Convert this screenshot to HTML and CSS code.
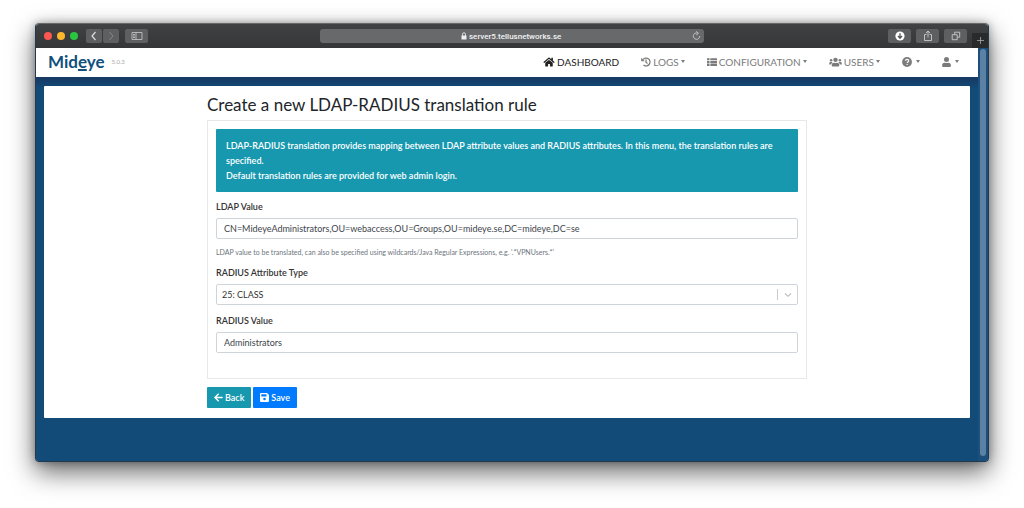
FILE: index.html
```html
<!DOCTYPE html>
<html lang="en">
<head>
    <meta charset="UTF-8">
    <meta name="viewport" content="width=device-width, initial-scale=1.0">
    <title>Mideye Server</title>
    <link rel="stylesheet" href="styles.css">
</head>
<body>
    <div class="window">
        <div class="toolbar">
            <div class="toolbar-side">
                <span class="dot red"></span>
                <span class="dot yellow"></span>
                <span class="dot green"></span>
                <div class="history">
                    <button aria-label="Previous page"><svg width="8" height="10" viewBox="0 0 8 10"><path d="M5.5 1 2 5l3.500 4" fill="none" stroke="#ddd" stroke-width="1.200"/></svg></button>
                    <button aria-label="Next page"><svg width="8" height="10" viewBox="0 0 8 10"><path d="M2.500 1 6 5 2.500 9" fill="none" stroke="#858688"/></svg></button>
                </div>
                <button aria-label="Sidebar"><svg width="12" height="10" viewBox="0 0 12 10"><path d="M1 1.500h10v7H1zM5 1.500v7M2 3.500h2M2 5h2M2 6.500h2" fill="none" stroke="#ccc" stroke-width=".8"/></svg></button>
            </div>
            <div class="address">
                <svg width="6" height="8" viewBox="0 0 6 8"><path d="M.5 3.500h5V7.500h-5z" fill="#eee"/><path d="M1.500 4V2.300a1.500 1.500 0 0 1 3 0V4" fill="none" stroke="#eee" stroke-width=".9"/></svg>
                <input type="text" value="server5.tellusnetworks.se" aria-label="Address" spellcheck="false">
                <button class="reload" aria-label="Reload"><svg width="9" height="10" viewBox="0 0 9 10"><path d="M7.700 5A3.200 3.200 0 1 1 5.500 2.100" fill="none" stroke="#ccc" stroke-width=".9"/><path d="M4.300.4 6.500 2.300 4.300 4" fill="none" stroke="#ccc" stroke-width=".9"/></svg></button>
            </div>
            <div class="toolbar-side right">
                <button aria-label="Downloads"><svg width="10" height="10" viewBox="0 0 10 10"><circle cx="5" cy="5" r="4.600" fill="#fff"/><path d="M5 2.200v4.500M3 5l2 2.300L7 5" fill="none" stroke="#555" stroke-width="1.300"/></svg></button>
                <button aria-label="Share"><svg width="10" height="12" viewBox="0 0 10 12"><path d="M3.500 4.500h-2v6h7v-6h-2M5 7.500V1M3 3l2-2 2 2" fill="none" stroke="#ccc" stroke-width=".9"/></svg></button>
                <button aria-label="Show tabs"><svg width="10" height="10" viewBox="0 0 10 10"><path d="M1.200 3.700h5v5h-5zM3.700 3.500V1.200h5v5H6.500" fill="none" stroke="#ccc" stroke-width=".9"/></svg></button>
            </div>
            <button class="new-tab" aria-label="New tab"><svg width="9" height="9" viewBox="0 0 9 9"><path d="M4.500 1v7M1 4.500h7" stroke="#aaa" stroke-width=".8"/></svg></button>
        </div>

        <div class="viewport">
            <div class="page">
                <header class="header">
                    <a href="#" class="logo">Mid<span>e</span>ye</a>
                    <span class="version">5.0.3</span>
                    <nav class="nav">
                        <a href="#" class="active">
                            <svg width="12" height="10" viewBox="0 0 576 512"><path fill="currentColor" d="M280 148 96 300v164c0 9 7 16 16 16h112c9 0 16-7 16-16v-96c0-9 7-16 16-16h64c9 0 16 7 16 16v96c0 9 7 16 16 16h112c9 0 16-7 16-16V300L296 148q-8-5-16 0zM572 251l-84-69V44c0-7-5-12-12-12h-56c-7 0-12 5-12 12v73l-90-74q-30-24-60 0L4 251q-7 7-2 17l26 31q7 7 17 2L280 107q8-5 16 0l235 194q10 5 17-2l26-31q5-10-2-17z"/></svg>
                            DASHBOARD
                        </a>
                        <a href="#">
                            <svg width="10" height="10" viewBox="0 0 512 512"><path fill="none" stroke="currentColor" stroke-width="64" d="M90 140A204 204 0 1 1 125 412M256 130v140l78 60"/><path fill="currentColor" d="M8 32v160c0 14 10 24 24 24h160z"/></svg>
                            LOGS<i class="caret"></i>
                        </a>
                        <a href="#">
                            <svg width="10" height="10" viewBox="0 0 512 512"><path fill="currentColor" d="M0 60h128v110H0zM170 60h342v110H170zM0 205h128v110H0zM170 205h342v110H170zM0 350h128v110H0zM170 350h342v110H170z"/></svg>
                            CONFIGURATION<i class="caret"></i>
                        </a>
                        <a href="#">
                            <svg width="13" height="10" viewBox="0 0 640 512"><g fill="currentColor"><circle cx="96" cy="160" r="64"/><circle cx="544" cy="160" r="64"/><circle cx="320" cy="144" r="112"/><path d="M0 320q0-64 64-64h64q26 0 45 18-65 36-75 110H32q-32 0-32-32zM640 320q0-64-64-64h-64q-26 0-45 18 65 36 75 110h66q32 0 32-32zM128 432v-29q0-115 115-115h8q69 32 138 0h8q115 0 115 115v29q0 48-48 48H176q-48 0-48-48z"/></g></svg>
                            USERS<i class="caret"></i>
                        </a>
                        <a href="#" aria-label="Help" class="icon-only">
                            <svg width="10" height="10" viewBox="0 0 10 10"><circle cx="5" cy="5" r="4.900" fill="currentColor"/><path d="M3.400 3.800c.2-1.900 3.300-1.800 3.300 0 0 1.100-1.600 1.100-1.600 2.200M5.100 6.900v1.200" fill="none" stroke="#fff" stroke-width="1.200"/></svg>
                            <i class="caret"></i>
                        </a>
                        <a href="#" aria-label="Account" class="icon-only">
                            <svg width="9" height="10" viewBox="0 0 448 512"><path fill="currentColor" d="M224 256a128 128 0 1 0 0-256 128 128 0 0 0 0 256zM314 288h-17q-73 32-146 0h-17Q0 296 0 422v42q0 48 48 48h352q48 0 48-48v-42q0-126-134-134z"/></svg>
                            <i class="caret"></i>
                        </a>
                    </nav>
                </header>

                <main class="card">
                    <form class="rule">
                        <h1>Create a new LDAP-RADIUS translation rule</h1>
                        <div class="fields">
                            <div class="alert">
                                <p>LDAP-RADIUS translation provides mapping between LDAP attribute values and RADIUS attributes. In this menu, the translation rules are specified.</p>
                                <p>Default translation rules are provided for web admin login.</p>
                            </div>
                            <label for="ldap-value">LDAP Value</label>
                            <input type="text" id="ldap-value" value="CN=MideyeAdministrators,OU=webaccess,OU=Groups,OU=mideye.se,DC=mideye,DC=se" spellcheck="false">
                            <p class="help">LDAP value to be translated, can also be specified using wildcards/Java Regular Expressions, e.g. '.*VPNUsers.*'</p>
                            <label for="attribute-type">RADIUS Attribute Type</label>
                            <div class="select">
                                <select id="attribute-type">
                                    <option>25: CLASS</option>
                                </select>
                                <svg width="8" height="6" viewBox="0 0 8 6"><path d="M1 1.500 4 4.300l3-2.800" fill="none" stroke="#bbb" stroke-width="1.100"/></svg>
                            </div>
                            <label for="radius-value">RADIUS Value</label>
                            <input type="text" id="radius-value" value="Administrators">
                        </div>
                        <div class="actions">
                            <button type="button" class="back"><svg width="9" height="9" viewBox="0 0 9 9"><path d="M8.700 4.500H1.200M4.700.8 1 4.500l3.700 3.700" fill="none" stroke="#fff" stroke-width="1.400"/></svg>Back</button>
                            <button type="submit" class="save"><svg width="9" height="9" viewBox="0 0 9 9"><path d="M1 0h6l2 2v6q0 1-1 1H1Q0 9 0 8V1q0-1 1-1zM1.300 1.300v2.200h5.200V1.300zM4.500 4.700a1.300 1.300 0 1 0 0 2.600 1.300 1.300 0 0 0 0-2.600z" fill="#fff" fill-rule="evenodd"/></svg>Save</button>
                        </div>
                    </form>
                </main>
            </div>
            <div class="scrollbar"><div class="thumb"></div></div>
        </div>
    </div>
</body>
</html>
```
FILE: styles.css
```css
*{
    margin: 0;
    padding: 0;
    box-sizing: border-box;
    font-family: Lato, sans-serif;
}
body{
    background: #fff;
    min-height: 100vh;
    padding: 23px 35px 46px;
    display: flex;
}
button{
    border: 0;
    cursor: pointer;
}
svg{
    flex: none;
}
.window{
    flex: 1;
    display: flex;
    flex-direction: column;
    border-radius: 4px;
    overflow: hidden;
    border: 1px solid #203a50;
    border-top-color: #66686a;
    box-shadow: 0 10px 26px rgba(0,0,0,0.6), 0 0 8px rgba(0,0,0,0.3);
}

/* browser toolbar */
.toolbar{
    position: relative;
    height: 24px;
    background: linear-gradient(#404244,#343638);
    display: flex;
    align-items: center;
    padding: 0 8px;
}
.toolbar-side{
    flex: 1;
    display: flex;
    align-items: center;
    gap: 5px;
}
.toolbar-side.right{
    justify-content: flex-end;
}
.toolbar-side.right button:last-child{
    margin-right: 13px;
}
.toolbar button{
    display: flex;
    align-items: center;
    justify-content: center;
    background: #5d5f61;
    width: 23px;
    height: 14px;
    border-radius: 2px;
}
.dot{
    width: 8px;
    height: 8px;
    border-radius: 50%;
}
.red{
    background: #fc5650;
}
.yellow{
    background: #fdb72c;
}
.green{
    background: #28c73f;
}
.history{
    display: flex;
    gap: 1px;
    margin: 0 1px 0 3px;
}
.toolbar .history button{
    width: 16px;
}
.address{
    position: relative;
    width: 41%;
    height: 14px;
    background: #67696b;
    border-radius: 3px;
    display: flex;
    align-items: center;
    justify-content: center;
    gap: 2px;
}
.address input{
    width: 94px;
    border: 0;
    outline: 0;
    background: none;
    color: #f2f2f2;
    font: 500 8px Roboto, sans-serif;
}
.toolbar .reload{
    position: absolute;
    right: 2px;
    width: 11px;
    background: none;
}
.toolbar .new-tab{
    position: absolute;
    right: 0;
    bottom: 0;
    width: 16px;
    height: 15px;
    background: #292a2b;
    border-radius: 0;
}

/* page */
.viewport{
    flex: 1;
    display: flex;
    background: #124a78;
}
.page{
    flex: 1;
    background: linear-gradient(#17365f 28px,#124a78 40px);
}
.header{
    height: 29px;
    background: #fff;
    display: flex;
    align-items: center;
    padding: 0 19px 2px 12px;
}
.logo{
    font: 700 17px/20px Lato, sans-serif;
    color: #10507d;
    text-decoration: none;
}
.logo span{
    text-decoration: underline 2px;
    text-underline-offset: 1px;
    text-decoration-skip-ink: none;
}
.version{
    font-size: 6px;
    color: #aaa;
    margin-left: 7px;
}
.nav{
    flex: 1;
    display: flex;
    justify-content: flex-end;
    gap: 22px;
}
.nav a{
    display: flex;
    align-items: center;
    gap: 2px;
    font-size: 10px;
    line-height: 14px;
    color: #7b7b7b;
    text-decoration: none;
}
.nav .active{
    color: #222;
}
.nav .icon-only{
    gap: 4px;
}
.caret{
    border: solid transparent;
    border-width: 3px 2px 0;
    border-top-color: currentColor;
}
.card{
    margin: 9px 8px 43px;
    background: #fff;
    border-radius: 1px;
    padding: 8px 8px 10px;
}
.rule{
    max-width: 600px;
    margin: 0 auto;
}
h1{
    font-size: 17px;
    font-weight: 400;
    line-height: 22px;
    color: #212529;
    margin-bottom: 4px;
}
.fields{
    border: 1px solid #e8e8e8;
    padding: 8px 8px 25px;
    display: flex;
    flex-direction: column;
}
.alert{
    background: #1798af;
    color: #fff;
    font-size: 9px;
    font-weight: 600;
    line-height: 15px;
    padding: 9px 10px;
    border-radius: 1px;
    margin-bottom: 9px;
}
label{
    font-size: 9px;
    font-weight: 600;
    line-height: 12px;
    color: #333;
    margin-bottom: 5px;
}
.fields input,.select select{
    width: 100%;
    height: 21px;
    border: 1px solid #ced4da;
    border-radius: 2px;
    background: #fff;
    color: #40464c;
    font-size: 9px;
    padding: 0 7px;
}
.help{
    font-size: 7px;
    line-height: 10px;
    color: #6c757d;
    margin: 8px 0 10px;
}
.select{
    position: relative;
    margin-bottom: 10px;
}
.select select{
    display: block;
    appearance: none;
    padding: 0 5px;
    color: #333;
}
.select svg{
    position: absolute;
    right: 6px;
    top: 8px;
}
.select::after{
    content: "";
    position: absolute;
    right: 20px;
    top: 5px;
    bottom: 5px;
    border-left: 1px solid #ccc;
}
.actions{
    display: flex;
    gap: 2px;
    margin-top: 8px;
}
.actions button{
    display: flex;
    align-items: center;
    gap: 2px;
    height: 21px;
    padding: 0 7px;
    border-radius: 1px;
    color: #fff;
    font-size: 9px;
    font-weight: 600;
}
.actions .back{
    background: #1798af;
}
.actions .save{
    background: #007bff;
}
.scrollbar{
    width: 10px;
    background: #1c4f7b;
    padding: 1px 2px 5px;
    display: flex;
}
.thumb{
    flex: 1;
    background: #5b81a5;
    border-radius: 3px;
}
```
